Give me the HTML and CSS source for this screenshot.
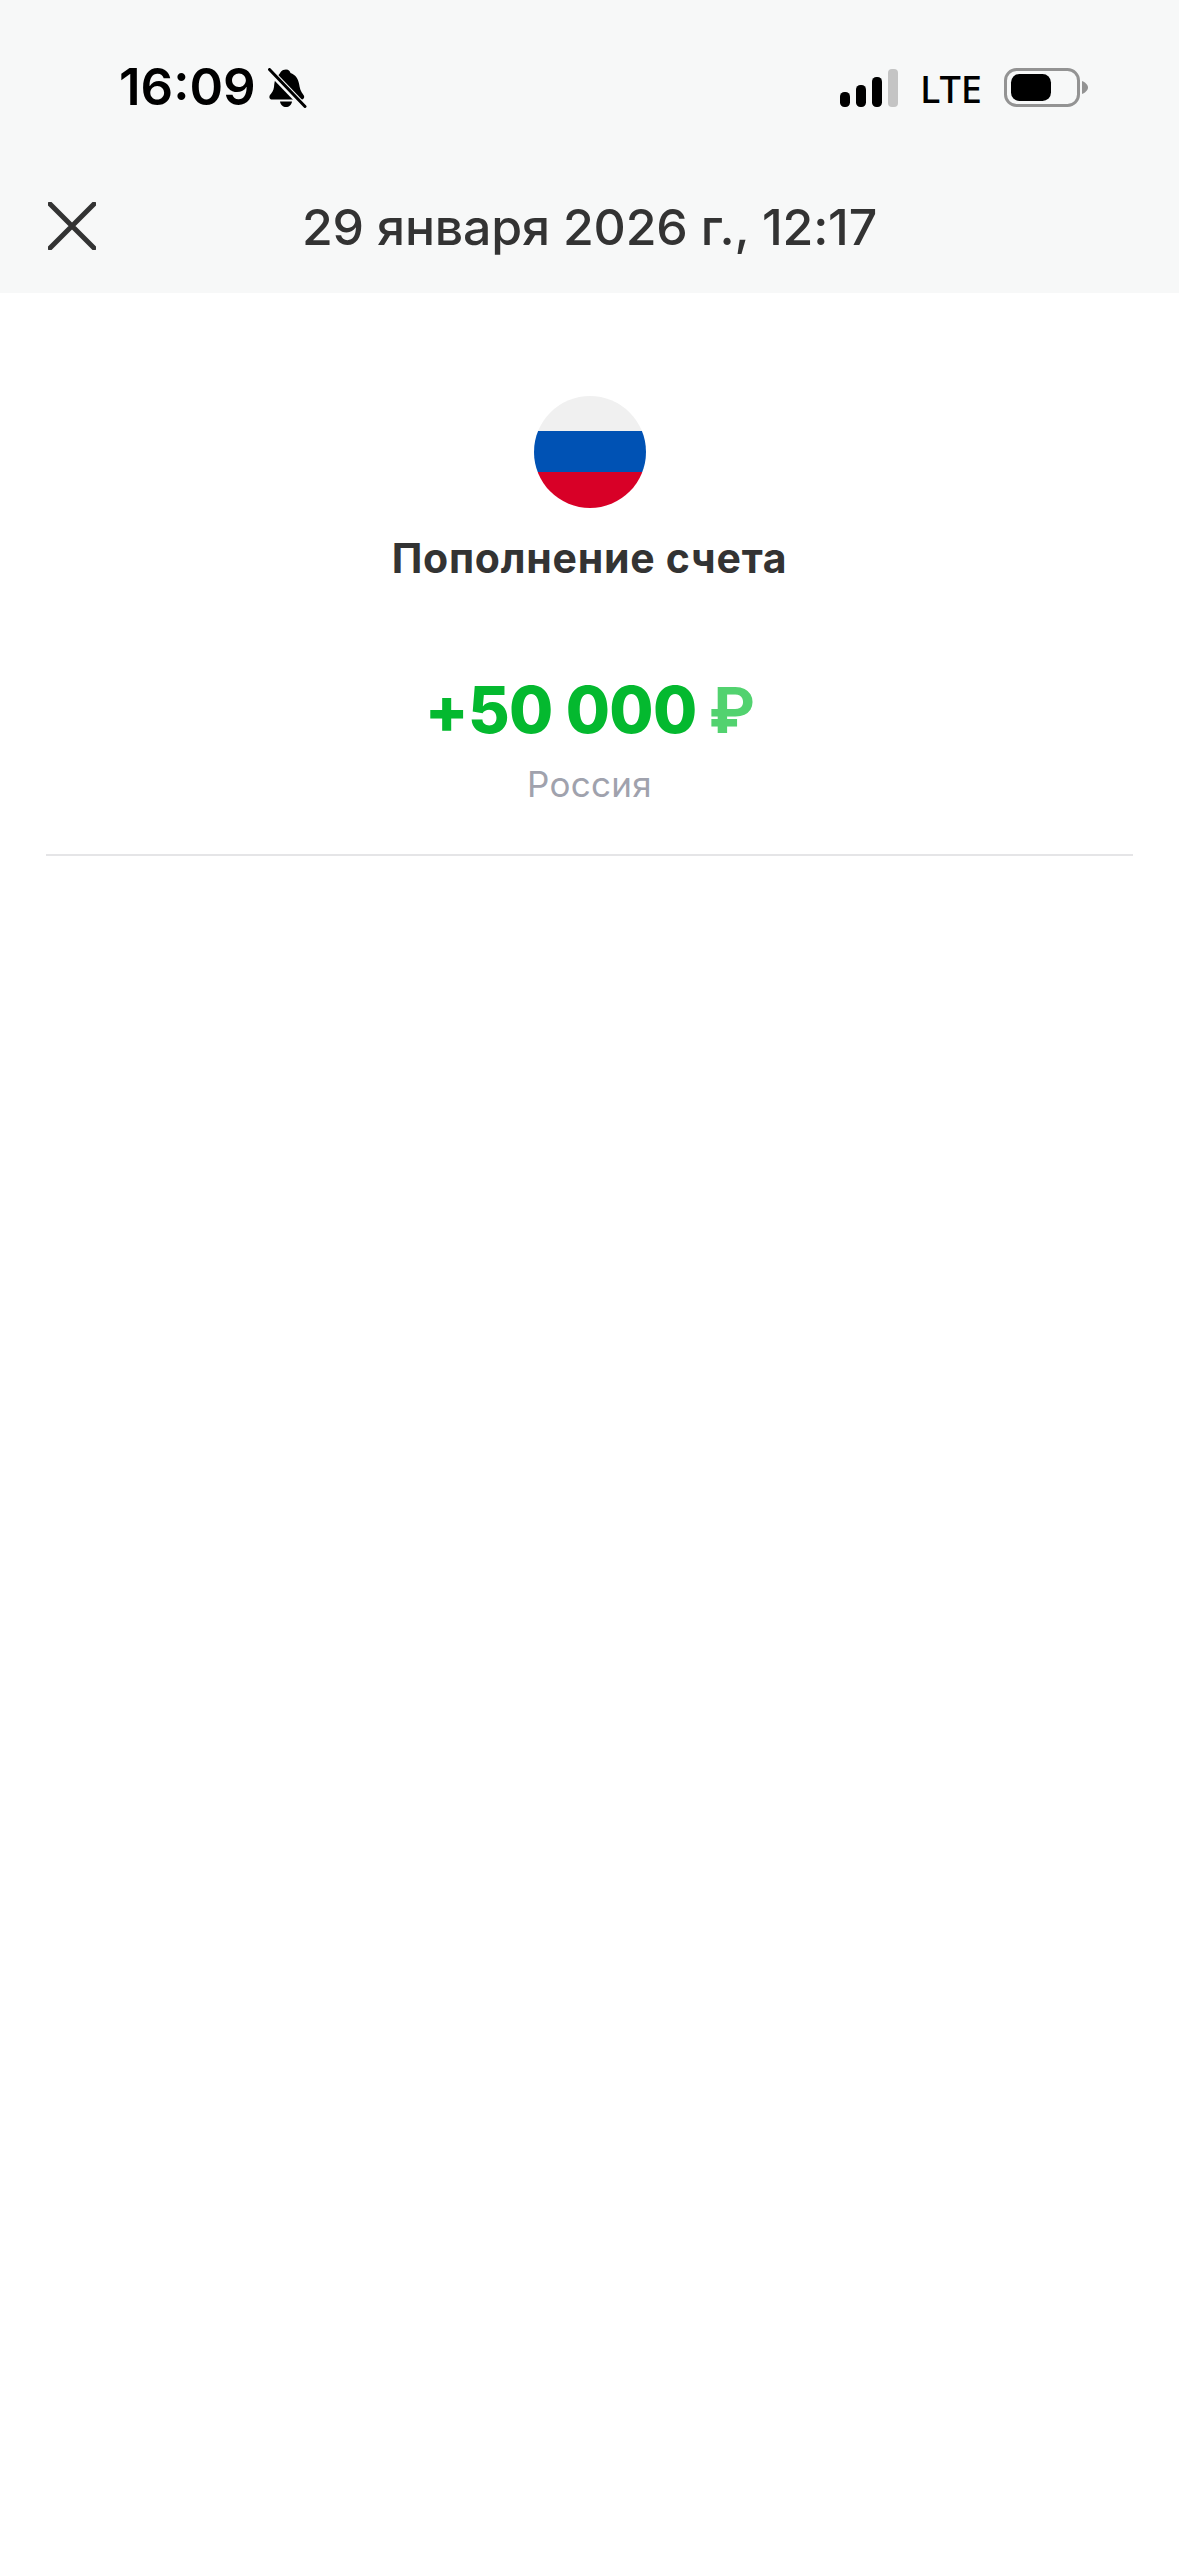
FILE: index.html
```html
<!DOCTYPE html>
<html lang="ru">
<head>
<meta charset="utf-8">
<title>Пополнение счета</title>
<link rel="stylesheet" href="styles.css">
</head>
<body>
<header class="top">
  <div class="status">
    <div class="status-left">
      <span class="time">16:09</span>
      <svg class="bell" viewBox="0 0 40 40" width="40" height="40"><path d="M19 1.500c3 0 4 2 4.500 3.500 5 1.700 7.500 5.500 8.500 10.500.8 4.500 1.500 8 4.500 11.500 1.500 2 .5 4.500-2 4.500H6c-3 .5-4.500-2-3-4.500 2-2.500 3.500-4.500 4-8 .5-4 .5-9 5-12.500C13.500 4.500 14.500 1.500 19 1.500z" fill="#000"/><path d="M13 33.500h12c-.5 3.500-3 5.500-6 5.500s-5.500-2-6-5.500z" fill="#000"/><path d="M1.500 1.500 37.500 39" stroke="#f7f8f8" stroke-width="6.500"/><path d="M2.500 1.500 38 38.500" stroke="#000" stroke-width="3" stroke-linecap="round"/></svg>
    </div>
    <div class="status-right">
      <svg class="signal" viewBox="0 0 60 38" width="60" height="38"><rect x="0" y="23" width="10" height="15" rx="4.500" fill="#000"/><rect x="16" y="16" width="10" height="22" rx="4.500" fill="#000"/><rect x="32" y="8" width="10" height="30" rx="4.500" fill="#000"/><rect x="48" y="0" width="10" height="38" rx="4" fill="#c4c4c4"/></svg>
      <span class="lte">LTE</span>
      <svg class="battery" viewBox="0 0 84 40" width="84" height="40"><rect x="1.500" y="1.500" width="73" height="36" rx="11" fill="none" stroke="#939393" stroke-width="3"/><rect x="7" y="6" width="40" height="27" rx="8.500" fill="#000"/><path d="M78 13c3 1 6 4 6 6.500s-3 5.500-6 6.500z" fill="#939393"/></svg>
    </div>
  </div>
  <div class="nav">
    <svg class="close" viewBox="0 0 48 48" width="48" height="48"><path d="M2 2 46 46M46 2 2 46" stroke="#333" stroke-width="5" stroke-linecap="round" fill="none"/></svg>
    <h1 class="date">29 января 2026 г., 12:17</h1>
  </div>
</header>
<main class="content">
  <svg class="flag" viewBox="0 0 112 112" width="112" height="112"><defs><clipPath id="c"><circle cx="56" cy="56" r="56"/></clipPath></defs><g clip-path="url(#c)"><rect width="112" height="36" fill="#f0f0f0"/><rect y="35" width="112" height="41" fill="#0052b4"/><rect y="76" width="112" height="36" fill="#d80027"/></g></svg>
  <h2 class="title">Пополнение счета</h2>
  <p class="amount">+50 000 <span class="currency">₽</span></p>
  <p class="region">Россия</p>
  <hr class="divider">
</main>
</body>
</html>
```
FILE: styles.css
```css
* { box-sizing: border-box; }
html, body { margin: 0; padding: 0; }
body {
  width: 1179px;
  height: 2556px;
  overflow: hidden;
  background: #fff;
  font-family: Inter, "Noto Sans", sans-serif;
  color: #333;
}
.top { background: #f7f8f8; height: 293px; }
.status {
  height: 164px;
  padding: 58px 91px 0 119px;
  display: flex;
  justify-content: space-between;
  align-items: flex-start;
}
.status-left { display: flex; align-items: center; gap: 11px; }
.time { font-size: 51px; font-weight: 600; line-height: 58px; color: #000; }
.bell { display: block; margin-top: 2px; }
.status-right { display: flex; align-items: center; padding-top: 10px; }
.signal { display: block; margin-right: 20px; }
.lte { font-size: 38px; font-weight: 500; line-height: 40px; color: #000; font-family: "Noto Sans", sans-serif; margin-right: 22px; }
.battery { display: block; }
.nav { position: relative; display: flex; justify-content: center; align-items: center; height: 129px; padding-bottom: 3px; }
.close { position: absolute; left: 48px; top: 38px; }
.date { margin: 0; font-size: 50px; font-weight: 500; line-height: 70px; letter-spacing: -0.2px; color: #333; }
.content { display: flex; flex-direction: column; align-items: center; padding: 103px 46px 0; }
.flag { display: block; }
.title { margin: 25px 0 0; font-size: 41px; font-weight: 700; line-height: 50px; letter-spacing: 0.75px; color: #333; }
.amount { margin: 87px 0 0; font-size: 64px; font-weight: 800; line-height: 80px; letter-spacing: -0.7px; color: #04b92f; }
.currency { color: #52d26f; font-family: "Liberation Sans", Roboto, sans-serif; font-weight: 700; }
.region { margin: 11px 0 0; font-size: 35px; line-height: 44px; letter-spacing: 0.3px; color: #a0a2ad; }
.divider { width: 100%; height: 2px; margin: 48px 0 0; border: 0; background: #e5e5e7; }
```
